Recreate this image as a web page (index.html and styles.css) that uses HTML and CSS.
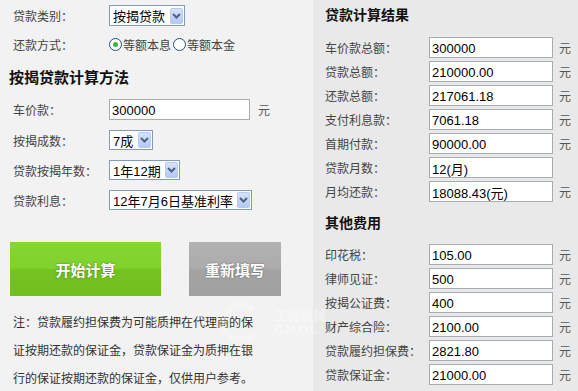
FILE: index.html
```html
<!DOCTYPE html>
<html lang="zh-CN">
<head>
    <meta charset="UTF-8">
    <title>按揭贷款计算器</title>
    <link rel="stylesheet" href="styles.css">
</head>
<body>
    <div class="calc">
        <div class="left">
            <div class="row first">
                <span class="label">贷款类别：</span>
                <div class="sel w76"><span class="val">按揭贷款</span><span class="arrow"><svg width="9" height="6" viewBox="0 0 9 6"><path d="M1 1 L4.5 4.5 L8 1" fill="none" stroke="#4d6185" stroke-width="2"/></svg></span></div>
            </div>
            <div class="row radios">
                <span class="label">还款方式：</span>
                <span class="radio on"></span><span class="rtext">等额本息</span>
                <span class="radio"></span><span class="rtext">等额本金</span>
            </div>
            <h2 class="title left-title">按揭贷款计算方法</h2>
            <div class="row tall">
                <span class="label">车价款：</span>
                <input class="box w141" type="text" value="300000">
                <span class="unit">元</span>
            </div>
            <div class="row">
                <span class="label">按揭成数：</span>
                <div class="sel w44"><span class="val">7成</span><span class="arrow"><svg width="9" height="6" viewBox="0 0 9 6"><path d="M1 1 L4.5 4.5 L8 1" fill="none" stroke="#4d6185" stroke-width="2"/></svg></span></div>
            </div>
            <div class="row">
                <span class="label">贷款按揭年数：</span>
                <div class="sel w71"><span class="val">1年12期</span><span class="arrow"><svg width="9" height="6" viewBox="0 0 9 6"><path d="M1 1 L4.5 4.5 L8 1" fill="none" stroke="#4d6185" stroke-width="2"/></svg></span></div>
            </div>
            <div class="row">
                <span class="label">贷款利息：</span>
                <div class="sel w143"><span class="val">12年7月6日基准利率</span><span class="arrow"><svg width="9" height="6" viewBox="0 0 9 6"><path d="M1 1 L4.5 4.5 L8 1" fill="none" stroke="#4d6185" stroke-width="2"/></svg></span></div>
            </div>
            <div class="buttons">
                <button class="btn green">开始计算</button>
                <button class="btn gray">重新填写</button>
            </div>
            <p class="note">注：贷款履约担保费为可能质押在代理商的保<br>证按期还款的保证金，贷款保证金为质押在银<br>行的保证按期还款的保证金，仅供用户参考。</p>
        </div>

        <div class="right">
            <h2 class="title">贷款计算结果</h2>
            <div class="list">
                <div class="item"><span class="label">车价款总额：</span><input class="box" type="text" value="300000"><span class="unit">元</span></div>
                <div class="item"><span class="label">贷款总额：</span><input class="box" type="text" value="210000.00"><span class="unit">元</span></div>
                <div class="item"><span class="label">还款总额：</span><input class="box" type="text" value="217061.18"><span class="unit">元</span></div>
                <div class="item"><span class="label">支付利息款：</span><input class="box" type="text" value="7061.18"><span class="unit">元</span></div>
                <div class="item"><span class="label">首期付款：</span><input class="box" type="text" value="90000.00"><span class="unit">元</span></div>
                <div class="item"><span class="label">贷款月数：</span><input class="box" type="text" value="12(月)"></div>
                <div class="item"><span class="label">月均还款：</span><input class="box" type="text" value="18088.43(元)"><span class="unit">元</span></div>
            </div>
            <h2 class="title second">其他费用</h2>
            <div class="list">
                <div class="item"><span class="label">印花税：</span><input class="box" type="text" value="105.00"><span class="unit">元</span></div>
                <div class="item"><span class="label">律师见证：</span><input class="box" type="text" value="500"><span class="unit">元</span></div>
                <div class="item"><span class="label">按揭公证费：</span><input class="box" type="text" value="400"><span class="unit">元</span></div>
                <div class="item"><span class="label">财产综合险：</span><input class="box" type="text" value="2100.00"><span class="unit">元</span></div>
                <div class="item"><span class="label">贷款履约担保费：</span><input class="box" type="text" value="2821.80"><span class="unit">元</span></div>
                <div class="item"><span class="label">贷款保证金：</span><input class="box" type="text" value="21000.00"><span class="unit">元</span></div>
            </div>
        </div>

        <div class="mark">
            <span class="mark-logo"></span>
            <span class="mark-text">工程机械<br><b>CMOL</b></span>
        </div>
    </div>
</body>
</html>
```

FILE: styles.css
```css
body {
    margin: 0;
    font-family: "Liberation Sans", "Noto Sans CJK SC", sans-serif;
    font-size: 12px;
    color: #444;
    background: #f2f2f2;
}
.calc {
    position: relative;
    display: flex;
    width: 578px;
    height: 391px;
    overflow: hidden;
}
.left {
    width: 313px;
    padding-top: 5px;
    background: #f2f2f2;
}
.right {
    flex: 1;
    padding: 5px 0 0 12px;
    background: #e9e9e9;
}
.row {
    display: flex;
    align-items: center;
    height: 20px;
    margin-top: 10px;
    padding-left: 13px;
}
.row.first {
    height: 21px;
    margin-top: 0;
}
.row.radios {
    margin-top: 8px;
}
.row.tall {
    height: 21px;
    margin-top: 11px;
}
.row .label {
    width: 96px;
    flex: none;
}
.title {
    margin: 0;
    height: 20px;
    line-height: 20px;
    font-size: 14px;
    font-weight: bold;
    color: #111;
}
.left-title {
    margin-top: 14px;
    padding-left: 9px;
    font-size: 15px;
}
.title.second {
    margin-top: 11px;
}

/* fake xp select */
.sel {
    display: flex;
    align-items: center;
    justify-content: space-between;
    box-sizing: border-box;
    height: 20px;
    padding: 0 1px 0 3px;
    border: 1px solid #7f9db9;
    background: #fff;
    font-size: 13px;
    color: #000;
}
.row.first .sel {
    height: 21px;
}
.w76 { width: 76px; }
.w44 { width: 44px; }
.w71 { width: 71px; }
.w143 { width: 143px; }
.arrow {
    display: flex;
    align-items: center;
    justify-content: center;
    width: 13px;
    height: 16px;
    border-radius: 2px;
    background: linear-gradient(#d7e3fc, #b4c8f6);
    border: 1px solid #b7c9ef;
    box-sizing: border-box;
}

.radio {
    box-sizing: border-box;
    width: 13px;
    height: 13px;
    border: 1px solid #1c5180;
    border-radius: 50%;
    background: #fff;
    position: relative;
}
.radio.on::after {
    content: "";
    position: absolute;
    left: 3px;
    top: 3px;
    width: 5px;
    height: 5px;
    border-radius: 50%;
    background: #3fb23f;
}
.rtext {
    margin: 0 2px 0 1px;
}

.box {
    box-sizing: border-box;
    height: 21px;
    padding: 1px 2px 0;
    border: 1px solid #a5acb2;
    background: #fff;
    font-family: "Liberation Sans", "Noto Sans CJK SC", sans-serif;
    font-size: 13px;
    color: #000;
    outline: none;
}
.w141 {
    width: 141px;
}
.unit {
    margin-left: 8px;
    color: #555;
}

.buttons {
    display: flex;
    gap: 28px;
    margin-top: 32px;
    padding-left: 10px;
}
.btn {
    height: 54px;
    border: none;
    font-family: "Noto Sans CJK SC", sans-serif;
    font-size: 15px;
    font-weight: bold;
    color: #fff;
    text-shadow: 0 0 2px rgba(0, 0, 0, 0.45);
}
.btn.green {
    width: 151px;
    background: linear-gradient(#86d733 0%, #7fd12c 48%, #74c320 52%, #70bf1e 100%);
}
.btn.gray {
    width: 92px;
    background: linear-gradient(#b2b2b2 0%, #acacac 48%, #a3a3a3 52%, #a1a1a1 100%);
}
.note {
    margin: 12px 0 0;
    padding-left: 13px;
    line-height: 28px;
    font-family: "Noto Sans CJK SC", sans-serif;
    color: #333;
}

.list {
    margin-top: 12px;
}
.title.second + .list {
    margin-top: 11px;
}
.item {
    display: flex;
    align-items: center;
    height: 21px;
    margin-bottom: 3px;
}
.item .label {
    width: 104px;
    flex: none;
}
.item .box {
    width: 124px;
}
.item .unit {
    margin-left: 6px;
}

/* faint site watermark */
.mark {
    position: absolute;
    left: 220px;
    top: 302px;
    display: flex;
    align-items: center;
    gap: 12px;
    opacity: 0.4;
    pointer-events: none;
}
.mark-logo {
    width: 30px;
    height: 28px;
    border: 6px solid #fff;
    border-right-color: transparent;
    border-radius: 50%;
    opacity: 0.7;
}
.mark-text {
    font-family: "Noto Sans CJK SC", sans-serif;
    font-size: 13px;
    line-height: 14px;
    font-weight: bold;
    color: #fff;
}
.mark-text b {
    font-family: "Liberation Sans", sans-serif;
    letter-spacing: 2px;
}
```
